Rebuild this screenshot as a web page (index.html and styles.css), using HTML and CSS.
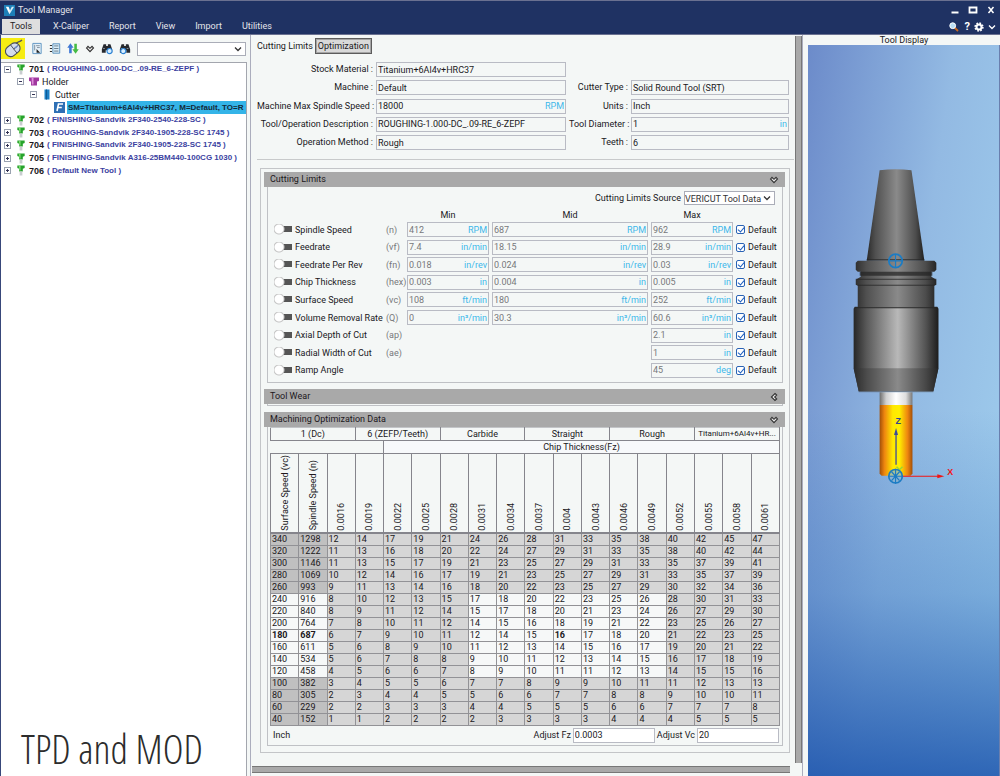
FILE: index.html
```html
<!DOCTYPE html>
<html lang="en">
<head>
<meta charset="utf-8">
<title>Tool Manager</title>
<link rel="stylesheet" href="styles.css">
</head>
<body>
<svg class="defs" width="0" height="0" aria-hidden="true">
  <symbol id="tool" viewBox="0 0 10 12"><path d="M1 .5h8v2.800L7 4v3H3V4L1 3.300z" fill="#27a32c"/><path d="M2.500 1h2v5h-1z" fill="#7fdc72"/><path d="M3.500 7h3v4.500h-3z" fill="#c9cdd0"/></symbol>
  <symbol id="chev" viewBox="0 0 8 6"><path d="M1 1.500l3 3 3-3" fill="none" stroke="currentColor" stroke-width="1.300"/></symbol>
  <symbol id="fold" viewBox="0 0 10 8"><path d="M1.500 3L3 1.300 5 3.300 7 1.300 8.500 3 5 6.600z" fill="#ececec" stroke="#333" stroke-width="1.100"/></symbol>
  <symbol id="binoc" viewBox="0 0 14 14"><path d="M3 2h3v2h2V2h3l2 6v4H8.500V9h-3v3H1V8z" fill="#26292e"/><path d="M2.500 7h2M9 7h2" stroke="#9aa3ad"/></symbol>
</svg>
<header class="titlebar">
  <div class="caption">
    <svg class="logo" viewBox="0 0 12 12"><path d="M0 0h12v12H0z" fill="#1d7fb8"/><path d="M2 2l4 8 1-3-2-5z" fill="#fff"/><path d="M6 10L11 2H8.500L6 7z" fill="#d7ecf8"/></svg>
    <h1>Tool Manager</h1>
    <div class="winbtns">
      <button aria-label="Minimize"><svg viewBox="0 0 10 10"><path d="M1.500 6.500h7v2h-7z" fill="#fff"/></svg></button>
      <button aria-label="Maximize"><svg viewBox="0 0 10 10"><path d="M1.500 2.500h7v5h-7z" fill="none" stroke="#fff" stroke-width="1.800"/></svg></button>
      <button aria-label="Close"><svg viewBox="0 0 10 10"><path d="M2.500 2l5 6M7.500 2l-5 6" stroke="#fff" stroke-width="1.500"/></svg></button>
    </div>
  </div>
  <div class="menubar">
    <nav>
      <button class="menu on">Tools</button>
      <button class="menu">X-Caliper</button>
      <button class="menu">Report</button>
      <button class="menu">View</button>
      <button class="menu">Import</button>
      <button class="menu">Utilities</button>
    </nav>
    <div class="quick">
      <button aria-label="Search"><svg viewBox="0 0 10 10"><path d="M5.500 5.500l3.500 3.500" stroke="#c9691f" stroke-width="1.800"/><circle cx="3.700" cy="3.700" r="2.900" fill="#b9def5" stroke="#fff"/></svg></button>
      <button aria-label="Help">?</button>
      <button aria-label="Settings"><svg viewBox="0 0 12 12"><circle cx="6" cy="6" r="4.600" fill="none" stroke="#fff" stroke-width="2" stroke-dasharray="2 1.600"/><circle cx="6" cy="6" r="3" fill="none" stroke="#fff" stroke-width="2.400"/></svg></button>
      <button aria-label="More"><svg viewBox="0 0 8 6" class="white"><use href="#chev"/></svg></button>
    </div>
  </div>
</header>
<div class="work">
  <aside class="left">
    <div class="toolbar">
      <button class="pick" aria-label="Pick"><svg viewBox="0 0 24 21"><path d="M14 7C16 3 18 5 21 2" fill="none" stroke="#555" stroke-width="1.300"/><g transform="rotate(52 11 12)"><rect x="6" y="3.500" width="10.500" height="15.500" rx="5" fill="#d5dcec" stroke="#4b4f5c" stroke-width="1.100"/><path d="M6 10h10.500M11.200 4v6" stroke="#4b4f5c" stroke-width=".9"/><path d="M10.500 5.500h1.500v3h-1.500z" fill="#6c89c9"/></g></svg></button>
      <button aria-label="New"><svg viewBox="0 0 12 14"><path d="M1.500 1.500h9v11h-9z" fill="#e6f2fa" stroke="#5b93c0"/><path d="M3.500 3v6M5 4h4M6 6h3" stroke="#7c8c9a" fill="none"/><path d="M5.500 7.500l4 4h-4z" fill="#222"/></svg></button>
      <button aria-label="List"><svg viewBox="0 0 14 14"><path d="M4.500 1.500h8v11h-8z" fill="#d8ecf7" stroke="#4b86b5"/><path d="M6 4h5M6 7h5M6 10h5" stroke="#5a6f80"/><path d="M1 3.500h2.500M1 7h2.500M1 10.500h2.500" stroke="#333" stroke-width="1.400"/></svg></button>
      <button aria-label="Sort"><svg viewBox="0 0 14 14"><path d="M4 1L.3 6h2.200v6.500h3V6h2.200z" fill="#3f78d4"/><path d="M10 13l3.700-5h-2.200V1.500h-3V8H6.300z" fill="#45bb45"/></svg></button>
      <button aria-label="Expand"><svg class="fold" viewBox="0 0 10 8"><use href="#fold"/></svg></button>
      <button aria-label="Find"><svg viewBox="0 0 14 14"><use href="#binoc"/><circle cx="10" cy="10" r="3" fill="#d9efff" stroke="#2b83d6" stroke-width="1.300"/></svg></button>
      <button aria-label="Find next"><svg viewBox="0 0 14 14"><use href="#binoc"/><circle cx="5" cy="10" r="3" fill="#d9efff" stroke="#2b83d6" stroke-width="1.300"/></svg></button>
      <div class="combo search"><select aria-label="Search text"><option></option></select><svg viewBox="0 0 8 6"><use href="#chev"/></svg></div>
    </div>
    <div class="treebox">
      <div class="tree" role="tree">
        <div class="node" role="treeitem"><button class="pm" aria-label="Collapse"></button><svg class="ic" viewBox="0 0 10 12"><use href="#tool"/></svg><b>701</b><span>( ROUGHING-1.000-DC_.09-RE_6-ZEPF )</span></div>
        <div class="node l2" role="treeitem"><button class="pm" aria-label="Collapse"></button><svg class="ic" viewBox="0 0 10 10"><path d="M0 1h10v3.500L8 5v4H2V5L0 4.500z" fill="#a1399f"/><path d="M2.500 1h2v7h-1.500z" fill="#e08fdb"/></svg><em>Holder</em></div>
        <div class="node l3" role="treeitem"><button class="pm" aria-label="Collapse"></button><svg class="ic" viewBox="0 0 10 10"><path d="M2.500 0h5v10h-5z" fill="#1b7fc4"/><path d="M4.500 0v10" stroke="#0e5a96"/></svg><em>Cutter</em></div>
        <div class="node l4" role="treeitem" aria-selected="true"><svg class="ic big" viewBox="0 0 11 11"><path d="M0 0h11v11H0z" fill="#2e6fb4"/><path d="M3 9l1.500-7H9M3.800 5.500h4" stroke="#fff" stroke-width="1.600" fill="none"/></svg><strong>SM=Titanium+6Al4v+HRC37, M=Default, TO=R</strong></div>
        <div class="node" role="treeitem"><button class="pm plus" aria-label="Expand"></button><svg class="ic" viewBox="0 0 10 12"><use href="#tool"/></svg><b>702</b><span>( FINISHING-Sandvik 2F340-2540-228-SC )</span></div>
        <div class="node" role="treeitem"><button class="pm plus" aria-label="Expand"></button><svg class="ic" viewBox="0 0 10 12"><use href="#tool"/></svg><b>703</b><span>( ROUGHING-Sandvik 2F340-1905-228-SC 1745 )</span></div>
        <div class="node" role="treeitem"><button class="pm plus" aria-label="Expand"></button><svg class="ic" viewBox="0 0 10 12"><use href="#tool"/></svg><b>704</b><span>( FINISHING-Sandvik 2F340-1905-228-SC 1745 )</span></div>
        <div class="node" role="treeitem"><button class="pm plus" aria-label="Expand"></button><svg class="ic" viewBox="0 0 10 12"><use href="#tool"/></svg><b>705</b><span>( FINISHING-Sandvik A316-25BM440-100CG 1030 )</span></div>
        <div class="node" role="treeitem"><button class="pm plus" aria-label="Expand"></button><svg class="ic" viewBox="0 0 10 12"><use href="#tool"/></svg><b>706</b><span>( Default New Tool )</span></div>
      </div>
      <p class="banner">TPD and MOD</p>
    </div>
  </aside>

  <main class="center">
    <div class="scroller">
      <div class="tabs"><button class="tab cur">Cutting Limits</button><button class="tab">Optimization</button></div>
      <form class="props">
        <label for="sm">Stock Material :</label><div class="field"><input id="sm" value="Titanium+6Al4v+HRC37"></div><i></i><i></i>
        <label for="ma">Machine :</label><div class="field"><input id="ma" value="Default"></div>
        <label for="ct">Cutter Type :</label><div class="field"><input id="ct" value="Solid Round Tool (SRT)"></div>
        <label for="ms">Machine Max Spindle Speed :</label><div class="field"><input id="ms" value="18000"><span>RPM</span></div>
        <label for="un">Units :</label><div class="field"><input id="un" value="Inch"></div>
        <label for="td">Tool/Operation Description :</label><div class="field"><input id="td" value="ROUGHING-1.000-DC_.09-RE_6-ZEPF"></div>
        <label for="dia">Tool Diameter :</label><div class="field"><input id="dia" value="1"><span>in</span></div>
        <label for="om">Operation Method :</label><div class="field"><input id="om" value="Rough"></div>
        <label for="te">Teeth :</label><div class="field"><input id="te" value="6"></div>
      </form>
      <div class="sections">
        <section>
          <h2>Cutting Limits<svg class="fold" viewBox="0 0 10 8"><use href="#fold"/></svg></h2>
          <div class="body limits">
            <div class="source"><label for="src">Cutting Limits Source</label><div class="combo"><select id="src"><option>VERICUT Tool Data</option></select><svg viewBox="0 0 8 6"><use href="#chev"/></svg></div></div>
            <div class="heads"><span></span><span>Min</span><span>Mid</span><span>Max</span><span></span></div>
            <div class="rows">
              <div class="row"><label class="sw"><input type="checkbox">Spindle Speed</label><small>(n)</small><div class="field"><input aria-label="n min" value="412"><span>RPM</span></div><div class="field"><input aria-label="n mid" value="687"><span>RPM</span></div><div class="field"><input aria-label="n max" value="962"><span>RPM</span></div><label class="ck"><input type="checkbox" checked>Default</label></div>
              <div class="row"><label class="sw"><input type="checkbox">Feedrate</label><small>(vf)</small><div class="field"><input aria-label="vf min" value="7.4"><span>in/min</span></div><div class="field"><input aria-label="vf mid" value="18.15"><span>in/min</span></div><div class="field"><input aria-label="vf max" value="28.9"><span>in/min</span></div><label class="ck"><input type="checkbox" checked>Default</label></div>
              <div class="row"><label class="sw"><input type="checkbox">Feedrate Per Rev</label><small>(fn)</small><div class="field"><input aria-label="fn min" value="0.018"><span>in/rev</span></div><div class="field"><input aria-label="fn mid" value="0.024"><span>in/rev</span></div><div class="field"><input aria-label="fn max" value="0.03"><span>in/rev</span></div><label class="ck"><input type="checkbox" checked>Default</label></div>
              <div class="row"><label class="sw"><input type="checkbox">Chip Thickness</label><small>(hex)</small><div class="field"><input aria-label="hex min" value="0.003"><span>in</span></div><div class="field"><input aria-label="hex mid" value="0.004"><span>in</span></div><div class="field"><input aria-label="hex max" value="0.005"><span>in</span></div><label class="ck"><input type="checkbox" checked>Default</label></div>
              <div class="row"><label class="sw"><input type="checkbox">Surface Speed</label><small>(vc)</small><div class="field"><input aria-label="vc min" value="108"><span>ft/min</span></div><div class="field"><input aria-label="vc mid" value="180"><span>ft/min</span></div><div class="field"><input aria-label="vc max" value="252"><span>ft/min</span></div><label class="ck"><input type="checkbox" checked>Default</label></div>
              <div class="row"><label class="sw"><input type="checkbox">Volume Removal Rate</label><small>(Q)</small><div class="field"><input aria-label="Q min" value="0"><span>in³/min</span></div><div class="field"><input aria-label="Q mid" value="30.3"><span>in³/min</span></div><div class="field"><input aria-label="Q max" value="60.6"><span>in³/min</span></div><label class="ck"><input type="checkbox" checked>Default</label></div>
              <div class="row"><label class="sw"><input type="checkbox">Axial Depth of Cut</label><small>(ap)</small><i></i><i></i><div class="field"><input aria-label="ap max" value="2.1"><span>in</span></div><label class="ck"><input type="checkbox" checked>Default</label></div>
              <div class="row"><label class="sw"><input type="checkbox">Radial Width of Cut</label><small>(ae)</small><i></i><i></i><div class="field"><input aria-label="ae max" value="1"><span>in</span></div><label class="ck"><input type="checkbox" checked>Default</label></div>
              <div class="row"><label class="sw"><input type="checkbox">Ramp Angle</label><small></small><i></i><i></i><div class="field"><input aria-label="Ramp max" value="45"><span>deg</span></div><label class="ck"><input type="checkbox" checked>Default</label></div>
            </div>
          </div>
        </section>
        <section>
          <h2>Tool Wear<svg class="fold side" viewBox="0 0 10 8"><use href="#fold"/></svg></h2>
          <div class="body shut"></div>
        </section>
        <section>
          <h2>Machining Optimization Data<svg class="fold" viewBox="0 0 10 8"><use href="#fold"/></svg></h2>
          <div class="body mod">
            <table>
              <thead>
                <tr class="g1"><th colspan="3">1 (Dc)</th><th colspan="3">6 (ZEFP/Teeth)</th><th colspan="3">Carbide</th><th colspan="3">Straight</th><th colspan="3">Rough</th><th colspan="3" class="long">Titanium+6Al4v+HR...</th></tr>
                <tr class="g2"><td colspan="4"></td><th colspan="14">Chip Thickness(Fz)</th></tr>
                <tr class="g3"><th><span>Surface Speed (vc)</span></th><th><span>Spindle Speed (n)</span></th><th><span>0.0016</span></th><th><span>0.0019</span></th><th><span>0.0022</span></th><th><span>0.0025</span></th><th><span>0.0028</span></th><th><span>0.0031</span></th><th><span>0.0034</span></th><th><span>0.0037</span></th><th><span>0.004</span></th><th><span>0.0043</span></th><th><span>0.0046</span></th><th><span>0.0049</span></th><th><span>0.0052</span></th><th><span>0.0055</span></th><th><span>0.0058</span></th><th><span>0.0061</span></th></tr>
              </thead>
              <tbody>
                <tr><td>340</td><td>1298</td><td>12</td><td>14</td><td>17</td><td>19</td><td>21</td><td>24</td><td>26</td><td>28</td><td>31</td><td>33</td><td>35</td><td>38</td><td>40</td><td>42</td><td>45</td><td>47</td></tr>
                <tr><td>320</td><td>1222</td><td>11</td><td>13</td><td>16</td><td>18</td><td>20</td><td>22</td><td>24</td><td>27</td><td>29</td><td>31</td><td>33</td><td>35</td><td>38</td><td>40</td><td>42</td><td>44</td></tr>
                <tr><td>300</td><td>1146</td><td>11</td><td>13</td><td>15</td><td>17</td><td>19</td><td>21</td><td>23</td><td>25</td><td>27</td><td>29</td><td>31</td><td>33</td><td>35</td><td>37</td><td>39</td><td>41</td></tr>
                <tr><td>280</td><td>1069</td><td>10</td><td>12</td><td>14</td><td>16</td><td>17</td><td>19</td><td>21</td><td>23</td><td>25</td><td>27</td><td>29</td><td>31</td><td>33</td><td>35</td><td>37</td><td>39</td></tr>
                <tr><td>260</td><td>993</td><td>9</td><td>11</td><td>13</td><td>14</td><td>16</td><td>18</td><td>20</td><td>22</td><td>23</td><td>25</td><td>27</td><td>29</td><td>30</td><td>32</td><td>34</td><td>36</td></tr>
                <tr class="in"><td>240</td><td>916</td><td>8</td><td>10</td><td>12</td><td>13</td><td>15</td><td>17</td><td>18</td><td>20</td><td>22</td><td>23</td><td>25</td><td>26</td><td>28</td><td>30</td><td>31</td><td>33</td></tr>
                <tr class="in"><td>220</td><td>840</td><td>8</td><td>9</td><td>11</td><td>12</td><td>14</td><td>15</td><td>17</td><td>18</td><td>20</td><td>21</td><td>23</td><td>24</td><td>26</td><td>27</td><td>29</td><td>30</td></tr>
                <tr class="in"><td>200</td><td>764</td><td>7</td><td>8</td><td>10</td><td>11</td><td>12</td><td>14</td><td>15</td><td>16</td><td>18</td><td>19</td><td>21</td><td>22</td><td>23</td><td>25</td><td>26</td><td>27</td></tr>
                <tr class="in"><td><b>180</b></td><td><b>687</b></td><td>6</td><td>7</td><td>9</td><td>10</td><td>11</td><td>12</td><td>14</td><td>15</td><td><b>16</b></td><td>17</td><td>18</td><td>20</td><td>21</td><td>22</td><td>23</td><td>25</td></tr>
                <tr class="in"><td>160</td><td>611</td><td>5</td><td>6</td><td>8</td><td>9</td><td>10</td><td>11</td><td>12</td><td>13</td><td>14</td><td>15</td><td>16</td><td>17</td><td>19</td><td>20</td><td>21</td><td>22</td></tr>
                <tr class="in"><td>140</td><td>534</td><td>5</td><td>6</td><td>7</td><td>8</td><td>8</td><td>9</td><td>10</td><td>11</td><td>12</td><td>13</td><td>14</td><td>15</td><td>16</td><td>17</td><td>18</td><td>19</td></tr>
                <tr class="in"><td>120</td><td>458</td><td>4</td><td>5</td><td>6</td><td>6</td><td>7</td><td>8</td><td>9</td><td>10</td><td>11</td><td>11</td><td>12</td><td>13</td><td>14</td><td>15</td><td>15</td><td>16</td></tr>
                <tr><td>100</td><td>382</td><td>3</td><td>4</td><td>5</td><td>5</td><td>6</td><td>7</td><td>7</td><td>8</td><td>9</td><td>9</td><td>10</td><td>11</td><td>11</td><td>12</td><td>13</td><td>13</td></tr>
                <tr><td>80</td><td>305</td><td>2</td><td>3</td><td>4</td><td>4</td><td>5</td><td>5</td><td>6</td><td>6</td><td>7</td><td>7</td><td>8</td><td>8</td><td>9</td><td>10</td><td>10</td><td>11</td></tr>
                <tr><td>60</td><td>229</td><td>2</td><td>2</td><td>3</td><td>3</td><td>3</td><td>4</td><td>4</td><td>5</td><td>5</td><td>5</td><td>6</td><td>6</td><td>7</td><td>7</td><td>7</td><td>8</td></tr>
                <tr><td>40</td><td>152</td><td>1</td><td>1</td><td>2</td><td>2</td><td>2</td><td>2</td><td>3</td><td>3</td><td>3</td><td>3</td><td>4</td><td>4</td><td>4</td><td>5</td><td>5</td><td>5</td></tr>
              </tbody>
            </table>
            <div class="adjust"><span>Inch</span><label for="fz">Adjust Fz</label><div class="field"><input id="fz" value="0.0003"></div><label for="vc">Adjust Vc</label><div class="field"><input id="vc" value="20"></div></div>
          </div>
        </section>
      </div>
    </div>
    <div class="vbar"></div>
    <div class="hbar"></div>
  </main>

  <aside class="right">
    <h2>Tool Display</h2>
    <div class="view">
      <svg viewBox="808 45 192 731" preserveAspectRatio="xMidYMin meet" role="img" aria-label="Tool assembly">
        <defs>
          <linearGradient id="steel"><stop offset="0" stop-color="#2a2a2a"/><stop offset=".15" stop-color="#505050"/><stop offset=".52" stop-color="#8a8a8a"/><stop offset=".85" stop-color="#4c4c4c"/><stop offset="1" stop-color="#1f1f1f"/></linearGradient>
          <linearGradient id="steel2"><stop offset="0" stop-color="#262626"/><stop offset=".15" stop-color="#5a5a5a"/><stop offset=".52" stop-color="#c4c4c4"/><stop offset=".85" stop-color="#555"/><stop offset="1" stop-color="#1c1c1c"/></linearGradient>
          <linearGradient id="gold"><stop offset="0" stop-color="#a24f08"/><stop offset=".15" stop-color="#ee860f"/><stop offset=".4" stop-color="#ffe800"/><stop offset=".6" stop-color="#ffef00"/><stop offset=".85" stop-color="#ee860f"/><stop offset="1" stop-color="#a24f08"/></linearGradient>
          <linearGradient id="shank"><stop offset="0" stop-color="#6d6d6d"/><stop offset=".2" stop-color="#d0d0d0"/><stop offset=".5" stop-color="#fff"/><stop offset=".8" stop-color="#ddd"/><stop offset="1" stop-color="#777"/></linearGradient>
        </defs>
        <path d="M880 171q16-2 32 0l13 91h-58z" fill="url(#steel)"/>
        <path d="M867 261h58" stroke="#252525"/>
        <path d="M858 262h77l2 2v7l-2 2h-3v5l5 3v5l-2 1v21h3l1 2v61l-5 22h-75l-5-22v-61l1-2h3v-21l-2-1v-5l5-3v-5h-3l-2-2v-7z" fill="url(#steel)"/>
        <path d="M854 310h85v60l-5 23h-75l-5-23z" fill="url(#steel2)" opacity=".8"/>
        <path d="M854 370h85l-5 24h-75z" fill="#333" opacity=".35"/>
        <path d="M860 273h73v4h-73z" fill="#222" opacity=".7"/>
        <path d="M856 280.500h81M858 286.500h77M855 309h83" stroke="#262626" fill="none" stroke-width=".8"/>
        <path d="M880 394h33v13h-33z" fill="url(#shank)"/>
        <path d="M880 407h33v69l-2 2h-29l-2-2z" fill="url(#gold)"/>
        <path d="M896.500 467v-31" stroke="#3d4a9a" stroke-width="1.300"/><path d="M896.500 430l2 7h-4z" fill="#3d4a9a"/>
        <text x="896" y="426" class="axis z">Z</text>
        <path d="M897 469l3 3 3-3" stroke="#9bd532" stroke-width="1.500" fill="none"/>
        <path d="M903 478.500h36" stroke="#f01414" stroke-width="1.200"/><path d="M945 478.500l-7-2v4z" fill="#f01414"/>
        <text x="948" y="477" class="axis x">X</text>
        <g fill="none" stroke="#1c7cc4" stroke-width="1.700"><circle cx="896" cy="262" r="6.800"/><path d="M896 255v14M889 262h14" stroke-width="1.200"/></g>
        <circle cx="896" cy="478.500" r="6" fill="#8db4cc" opacity=".75"/>
        <g fill="none" stroke="#1c7cc4" stroke-width="1.700"><circle cx="896" cy="478.500" r="6.800"/><path d="M896 471v15M889 478.500h14M892 474l8 9M900 474l-8 9" stroke-width="1.200"/></g>
      </svg>
    </div>
  </aside>
</div>
</body>
</html>
```
FILE: styles.css
```css
* { box-sizing: border-box; }
html, body { height: 100%; }
body {
  margin: 0;
  display: flex;
  flex-direction: column;
  font: 9px/12px Roboto, "Liberation Sans", sans-serif;
  color: #20181c;
  background: #f4f7f6;
}
h1, h2, p { margin: 0; font: inherit; }
button, input, select { font: inherit; color: inherit; padding: 0; border: 0; background: none; border-radius: 0; outline: 0; }
svg { display: block; }
.defs { position: absolute; }

/* title bar */
.titlebar { background: #1f3263; color: #e4e4ea; border-top: 1px solid #6a7191; border-bottom: 1px solid #6a7191; flex: none; }
.caption { display: flex; align-items: center; height: 18px; padding: 0 4px; gap: 3px; }
.logo { width: 11px; height: 11px; }
.caption h1 { flex: 1; }
.winbtns { display: flex; gap: 8px; }
.winbtns svg { width: 10px; height: 10px; }
.menubar { display: flex; justify-content: space-between; height: 15px; }
.menubar nav { display: flex; padding-left: 2px; }
.menu { padding: 0 10px; height: 15px; line-height: 15px; }
.menu.on { background: #dedede; color: #222; padding: 0 8px; margin-right: 3px; }
.quick { display: flex; gap: 4px; align-items: center; padding-right: 4px; }
.quick button { height: 12px; font-weight: 700; font-size: 11px; color: #fff; display: flex; align-items: center; }
.quick svg { width: 10px; height: 10px; }
.quick button:first-child { margin-right: 2px; }
.quick svg.white { width: 8px; height: 6px; color: #fff; }

.work { flex: 1; display: grid; grid-template-columns: 247px minmax(0, 556px) minmax(192px, 1fr); min-height: 0; }

/* left */
.left { display: flex; flex-direction: column; border-left: 1px solid #38477a; min-width: 0; }
.toolbar { display: flex; align-items: center; height: 27px; gap: 6px; padding-right: 1px; }
.toolbar svg { width: 12px; height: 13px; }
.toolbar .pick { background: #f6ec12; width: 24px; height: 21px; }
.toolbar .pick svg { width: 24px; height: 21px; }
.toolbar svg.fold { width: 10px; height: 8px; }
.combo { position: relative; background: #fff; border: 1px solid #aaadb8; height: 14px; color: #333; }
.combo select { appearance: none; width: 100%; height: 12px; display: block; }
.combo svg { position: absolute; right: 3px; top: 3px; width: 8px; height: 6px; pointer-events: none; }
.search { flex: 1; }
.search svg { width: 8px; height: 6px; }
.treebox { flex: 1; display: flex; flex-direction: column; background: #fff; border: 1px solid #a3a6ae; border-width: 1px 1px 0 0; overflow: hidden; }
.tree { display: flex; flex-direction: column; min-height: 114px; font-weight: 700; font-size: 9px; }
.node { flex: 1; display: flex; align-items: center; gap: 3px; padding-left: 3px; white-space: nowrap; }
.node span { color: #3b3f9f; font-size: 8px; font-family: "Liberation Sans", sans-serif; }
.node b { font: 700 9px/12px "Liberation Sans", sans-serif; }
.node em { font-style: normal; font-weight: 400; }
.node strong { align-self: stretch; flex: 1; background: #34b4e8; color: #132a3a; overflow: hidden; font: 700 8px/13px "Liberation Sans", sans-serif; padding-left: 1px; min-width: 0; }
.l2 { padding-left: 16px; }
.l3 { padding-left: 29px; }
.l4 { padding-left: 53px; gap: 2px; }
.ic { width: 10px; height: 11px; flex: none; }
.ic.big { width: 11px; }
.pm { width: 7px; height: 7px; border: 1px solid #9aa2b0; background: linear-gradient(#335, #335) center / 3px 1px no-repeat; margin-right: 2px; }
.pm.plus { background: linear-gradient(#335, #335) center / 3px 1px no-repeat, linear-gradient(#335, #335) center / 1px 3px no-repeat; }
.banner { margin-top: auto; padding: 0 0 5px 20px; font: 300 40px/44px "Open Sans Condensed Light", "Roboto Condensed Light", "Roboto Condensed", Roboto, sans-serif; color: #2c2c2c; white-space: nowrap; }

/* centre */
.center { display: grid; grid-template: minmax(0, 1fr) 12px / minmax(0, 1fr) 7px; border: solid #abadbd; border-width: 0 1px; margin-left: 3px; padding-top: 1px; }
.scroller { padding: 2px 1px 0 6px; min-width: 0; overflow: hidden; }
.vbar { background: #a9a9a9; border-left: 1px solid #777; border-right: 1px solid #777; margin-bottom: 1px; }
.hbar { background: #a9a9a9; border: solid #777; border-width: 1px 0; height: 7px; margin: 2px 5px 0 1px; }
.tabs { display: flex; gap: 2px; height: 16px; }
.tab { padding: 0 2px; }
.tab.cur { padding: 0; }
.tabs .tab:last-child { background: #d9d9d9; border: 1px solid #5c5c5c; box-shadow: inset 0 0 0 1px #a5a5a5; }
.props { display: grid; grid-template-columns: 116px minmax(0, 190px) 59px minmax(0, 1fr); column-gap: 3px; align-content: space-between; min-height: 88px; margin: 8px 0 0; padding-right: 5px; }
.props label { text-align: right; line-height: 15px; white-space: nowrap; }
.field { display: flex; align-items: center; height: 15px; border: 1px solid #b9bbc4; padding: 0 1px; min-width: 0; }
.field input { flex: 1; width: 0; min-width: 0; height: 12px; }
.field span { color: #3db7ea; }
.sections { border: 1px solid #c3c5c8; margin: 18px 4px 0 3px; padding: 3px 4px 6px 3px; position: relative; display: grid; gap: 6px; }
.sections::before { content: ""; position: absolute; left: -4px; right: -5px; top: -10px; height: 1px; background: #c8cacb; }
h2 { line-height: 15px; }
section h2 { background: #a9a9a9; padding: 0 6px; display: flex; justify-content: space-between; align-items: center; }
.fold { width: 10px; height: 8px; }
.side { transform: rotate(90deg); }
.body { border: 1px solid #bfc1c5; border-top: 0; margin: 0 2px 0 3px; }
.shut { height: 2px; }
.limits { padding: 4px 6px 3px 6px; }
.source { display: flex; justify-content: flex-end; gap: 3px; padding-right: 1px; line-height: 14px; }
.source .combo { width: 91px; }
.heads, .row { display: grid; grid-template-columns: 109px 18px 82px minmax(0, 1fr) 82px 40px; column-gap: 3px; align-items: center; }
.heads { grid-template-columns: 130px 82px minmax(0, 1fr) 82px 40px; text-align: center; line-height: 12px; padding: 4px 0 0; }
.rows { display: grid; grid-auto-rows: 1fr; min-height: 158px; }
.row .field { color: #77777b; height: 15px; }
.row small { font-size: 9px; color: #77777b; white-space: nowrap; }
.sw { display: flex; align-items: center; gap: 3px; white-space: nowrap; }
.sw input { appearance: none; margin: 0; width: 18px; height: 11px; background: radial-gradient(circle at 5px 5px, #fff 4px, #c4c4c4 5px, transparent 6px), linear-gradient(#555, #555) 7px 2px / 11px 6px no-repeat; }
.ck { display: flex; align-items: center; gap: 3px; }
.ck input { appearance: none; margin: 0; width: 9px; height: 9px; border: 1px solid #2a63b5; border-radius: 2px; position: relative; background: #fff; flex: none; }
.ck input:checked::after { content: ""; position: absolute; left: 2px; top: 0; width: 3px; height: 5px; border: solid #1d5fc0; border-width: 0 1px 1px 0; transform: rotate(40deg); }

table { width: 100%; border-collapse: collapse; table-layout: fixed; }
.mod { padding: 0 2px 2px; }
th { font-weight: 400; padding: 0; border: 1px solid #85858c; white-space: nowrap; }
.long { font-size: 8px; }
.g1 th { height: 13px; border-top-color: #c3c5c8; }
.g2 th { height: 13px; background: #f7f9fb; }
.g2 td { border: 0; background: none; }
.g3 th { height: 79px; vertical-align: bottom; border-bottom-width: 2px; }
.g3 span { display: inline-block; writing-mode: vertical-rl; transform: rotate(180deg); line-height: 12px; padding-top: 1px; vertical-align: bottom; }
td { height: 12px; line-height: 11px; padding: 0 0 0 1px; border: 1px solid #929296; background: #d6d6d6; }
tbody td:nth-child(-n+2) { background: #c0c0c0; }
.in td:nth-child(-n+2), .in td:nth-child(n+8):nth-child(-n+14) { background: #f6f8f8; }
.adjust { display: grid; grid-template-columns: minmax(0, 1fr) auto 82px auto 82px; gap: 2px; align-items: center; padding: 2px 1px 0 3px; line-height: 15px; }
.adjust .field { background: #fff; }

/* right */
.right { display: flex; flex-direction: column; padding-left: 5px; }
.right h2 { text-align: center; line-height: 10px; }
.view { flex: 1; min-height: 0; background: linear-gradient(180deg, transparent 50%, rgba(35, 98, 180, .3) 75%, rgba(18, 76, 168, .8)), linear-gradient(98deg, #6c8bca, #93bae3 50%, #a0cfee); border-right: 1px solid #6a7fae; }
.view svg { width: 100%; height: 100%; }
.axis { font: 700 9px "Liberation Sans", sans-serif; }
.z { fill: #34408f; }
.x { fill: #f01414; }
```
